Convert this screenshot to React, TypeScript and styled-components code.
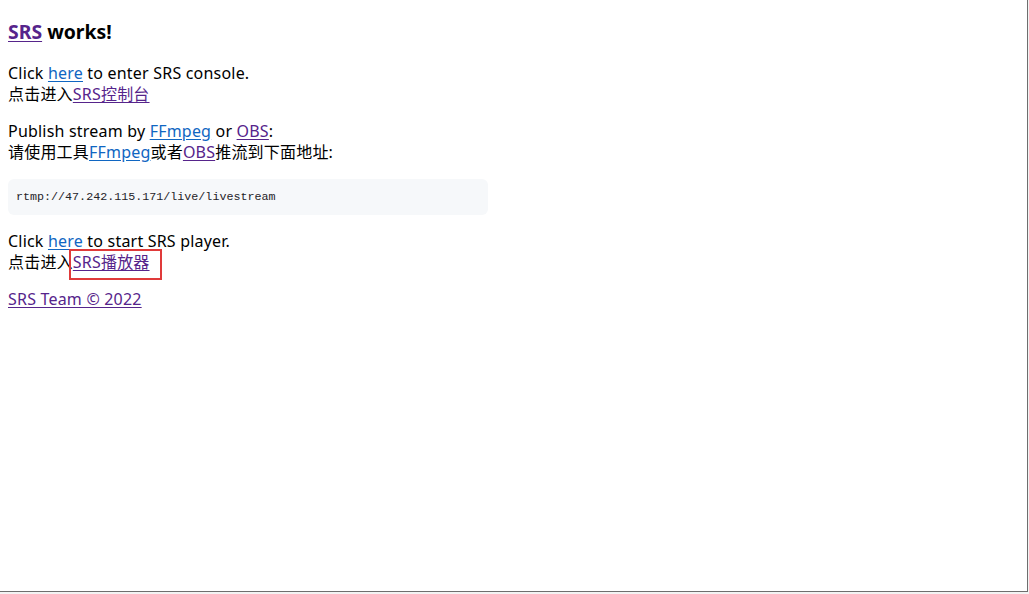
import styled, { createGlobalStyle } from 'styled-components';

const GlobalStyle = createGlobalStyle`
  html, body {
    margin: 0;
    padding: 0;
    background: #f3f3f3;
  }
  body {
    font-family: "Noto Sans", "Noto Sans CJK SC", sans-serif;
  }
`

const Page = styled.div`
  box-sizing: border-box;
  width: 1028px;
  height: 592px;
  background: #ffffff;
  border-right: 1px solid #6e6e6e;
  border-bottom: 1px solid #6e6e6e;
  padding: 1px 8px;
  color: #000;
  font-size: 16px;
  line-height: 21px;
  letter-spacing: 0.2px;
`

const Title = styled.h3`
  font-size: 19.4px;
  line-height: 26px;
  font-weight: 700;
  letter-spacing: 0;
  margin: 18px 0 18px;
`

const Para = styled.p`
  margin: 16px 0;
`

const Link = styled.a<{ visited?: boolean }>`
  color: ${props => (props.visited ? '#56248b' : '#1066c2')};
  text-decoration: underline;
  text-underline-offset: 2px;
`

const Code = styled.pre`
  box-sizing: border-box;
  width: 480px;
  height: 36px;
  margin: 16px 0;
  padding: 0 8px;
  display: flex;
  align-items: center;
  background: #f6f8fa;
  border-radius: 6px;
  font-family: "Liberation Mono", monospace;
  font-size: 11.7px;
  letter-spacing: 0;
  color: #1f2328;
`

const Marked = styled.span`
  position: relative;

  &::after {
    content: '';
    position: absolute;
    left: -4px;
    right: -12px;
    top: -2px;
    bottom: -7px;
    border: 2px solid #e03a3a;
    pointer-events: none;
  }
`

export default function App() {
  return (
    <>
      <GlobalStyle />
      <Page>
        <Title>
          <Link visited href="#">SRS</Link> works!
        </Title>
        <Para>
          Click <Link href="#">here</Link> to enter SRS console.
          <br />
          点击进入<Link visited href="#">SRS控制台</Link>
        </Para>
        <Para>
          Publish stream by <Link href="#">FFmpeg</Link> or <Link visited href="#">OBS</Link>:
          <br />
          请使用工具<Link href="#">FFmpeg</Link>或者<Link visited href="#">OBS</Link>推流到下面地址:
        </Para>
        <Code>rtmp://47.242.115.171/live/livestream</Code>
        <Para>
          Click <Link href="#">here</Link> to start SRS player.
          <br />
          点击进入<Marked><Link visited href="#">SRS播放器</Link></Marked>
        </Para>
        <Para>
          <Link visited href="#">SRS Team © 2022</Link>
        </Para>
      </Page>
    </>
  );
}
